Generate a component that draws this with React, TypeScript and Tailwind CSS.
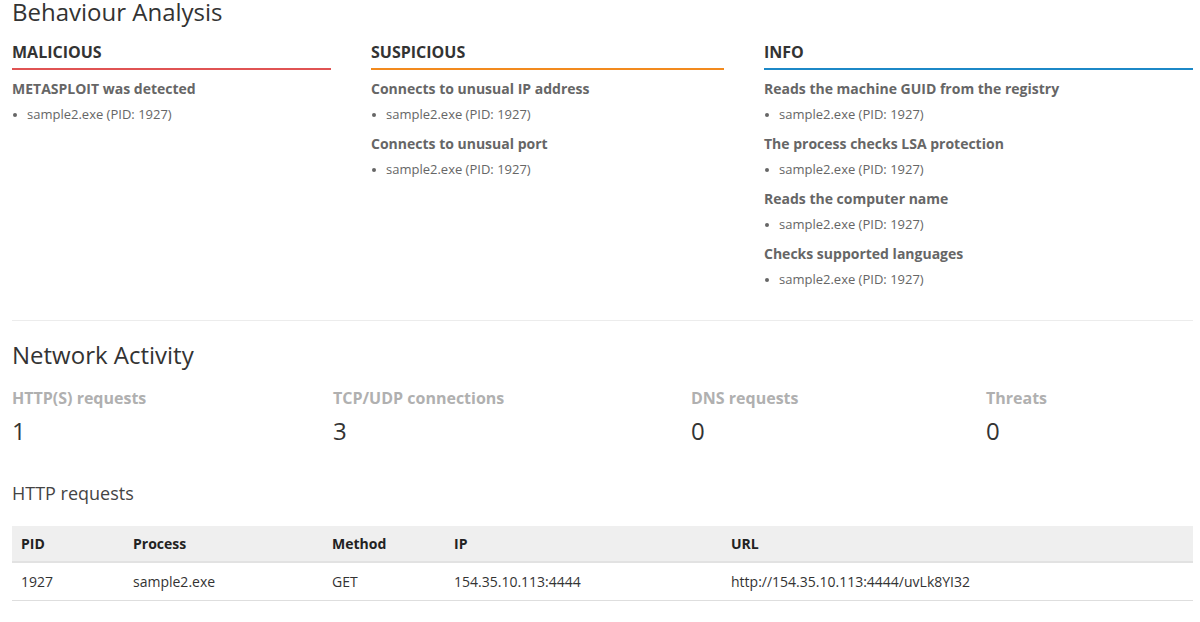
import React from "react";

// Data
interface Finding {
  title: string;
  items: string[];
}

interface Group {
  name: string;
  lineColor: string;
  findings: Finding[];
}

const proc = "sample2.exe (PID: 1927)";

const groups: Group[] = [
  {
    name: "MALICIOUS",
    lineColor: "border-[#e05353]",
    findings: [{ title: "METASPLOIT was detected", items: [proc] }],
  },
  {
    name: "SUSPICIOUS",
    lineColor: "border-[#f28a1e]",
    findings: [
      { title: "Connects to unusual IP address", items: [proc] },
      { title: "Connects to unusual port", items: [proc] },
    ],
  },
  {
    name: "INFO",
    lineColor: "border-[#1c88c7]",
    findings: [
      { title: "Reads the machine GUID from the registry", items: [proc] },
      { title: "The process checks LSA protection", items: [proc] },
      { title: "Reads the computer name", items: [proc] },
      { title: "Checks supported languages", items: [proc] },
    ],
  },
];

const stats = [
  { label: "HTTP(S) requests", value: "1" },
  { label: "TCP/UDP connections", value: "3" },
  { label: "DNS requests", value: "0" },
  { label: "Threats", value: "0" },
];

const columns = ["PID", "Process", "Method", "IP", "URL"];

const rows = [
  ["1927", "sample2.exe", "GET", "154.35.10.113:4444", "http://154.35.10.113:4444/uvLk8YI32"],
];

// Behaviour column
const GroupColumn: React.FC<{ group: Group }> = ({ group }) => (
  <div>
    <h3
      className={`border-b-2 pb-[6px] text-[16px] leading-5 font-bold text-[#333] ${group.lineColor}`}
    >
      {group.name}
    </h3>
    <div className="mt-[9px] flex flex-col gap-[10px]">
      {group.findings.map((f, i) => (
        <div key={i}>
          <div className="text-[14px] leading-5 font-bold text-[#666]">{f.title}</div>
          <ul className="mt-[5px]">
            {f.items.map((it, j) => (
              <li key={j} className="flex items-center text-[13px] leading-5 text-[#666]">
                <span className="ml-[1px] mr-[10px] mt-[1px] h-[4px] w-[4px] rounded-full bg-[#666]" />
                {it}
              </li>
            ))}
          </ul>
        </div>
      ))}
    </div>
  </div>
);

export default function App() {
  return (
    <div
      className="min-h-[622px] bg-white pl-3 pr-[7px] text-[#333]"
      style={{ fontFamily: '"Open Sans", "Noto Sans", sans-serif' }}
    >
      {/* Behaviour Analysis */}
      <h2 className="text-[24px] leading-6 text-[#333]">Behaviour Analysis</h2>
      <div className="mt-[18px] grid grid-cols-[319px_353px_1fr] gap-x-[40px]">
        {groups.map((g) => (
          <GroupColumn key={g.name} group={g} />
        ))}
      </div>

      <div className="mt-[31px] border-t border-[#ececec]" />

      {/* Network Activity */}
      <h2 className="mt-[22px] text-[24px] leading-6 text-[#333]">Network Activity</h2>
      <div className="mt-[21px] grid grid-cols-[321px_358px_295px_1fr]">
        {stats.map((s) => (
          <div key={s.label}>
            <div className="text-[16px] leading-5 font-bold text-[#b0b0b0]">{s.label}</div>
            <div className="mt-[9px] text-[24px] leading-7 text-[#333]">{s.value}</div>
          </div>
        ))}
      </div>

      <h3 className="mt-[36px] text-[18px] leading-6 text-[#444]">HTTP requests</h3>

      <table className="mt-[21px] w-full border-collapse text-left">
        <colgroup>
          <col className="w-[112px]" />
          <col className="w-[199px]" />
          <col className="w-[122px]" />
          <col className="w-[277px]" />
          <col />
        </colgroup>
        <thead>
          <tr className="border-b-2 border-[#e2e2e2] bg-[#efefef]">
            {columns.map((c) => (
              <th key={c} className="h-[36px] px-[9px] text-[14px] font-bold text-[#222]">
                {c}
              </th>
            ))}
          </tr>
        </thead>
        <tbody>
          {rows.map((r, i) => (
            <tr key={i} className="border-b border-[#dedede]">
              {r.map((cell, j) => (
                <td key={j} className="h-[38px] px-[9px] text-[14px] text-[#333]">
                  {cell}
                </td>
              ))}
            </tr>
          ))}
        </tbody>
      </table>
    </div>
  );
}
